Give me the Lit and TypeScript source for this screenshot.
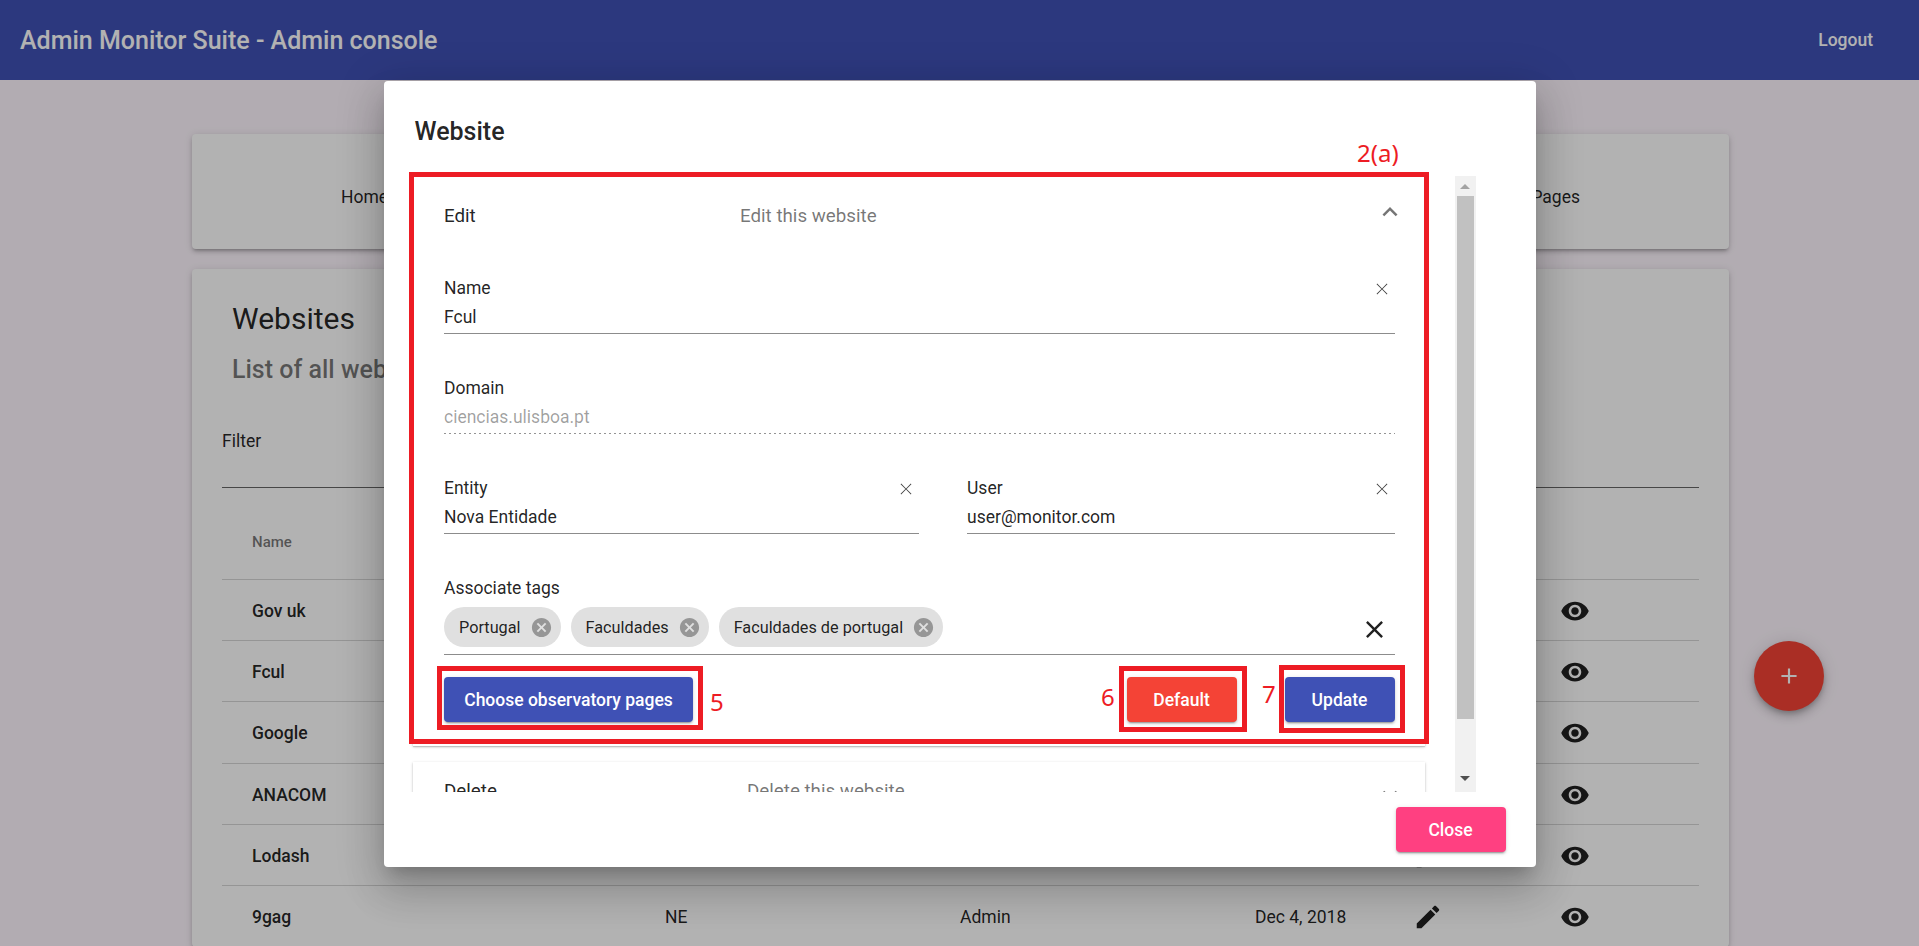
import { LitElement, css, html, svg } from 'lit'
import { customElement } from 'lit/decorators.js'

const ICONS = {
  eye: 'M12 4.5C7 4.5 2.73 7.61 1 12c1.73 4.39 6 7.5 11 7.5s9.27-3.11 11-7.5c-1.73-4.39-6-7.5-11-7.5zM12 17c-2.76 0-5-2.24-5-5s2.24-5 5-5 5 2.24 5 5-2.24 5-5 5zm0-8c-1.66 0-3 1.34-3 3s1.34 3 3 3 3-1.34 3-3-1.34-3-3-3z',
  edit: 'M3 17.25V21h3.75L17.81 9.94l-3.75-3.75L3 17.25zM20.71 7.04c.39-.39.39-1.02 0-1.41l-2.34-2.34c-.39-.39-1.02-.39-1.41 0l-1.83 1.83 3.75 3.75 1.83-1.83z',
  less: 'M12 8l-6 6 1.41 1.41L12 10.83l4.59 4.58L18 14z',
  more: 'M16.59 8.59L12 13.17 7.41 8.59 6 10l6 6 6-6z',
  cancel: 'M12 2C6.47 2 2 6.47 2 12s4.47 10 10 10 10-4.47 10-10S17.53 2 12 2zm5 13.59L15.59 17 12 13.41 8.41 17 7 15.59 10.59 12 7 8.41 8.41 7 12 10.59 15.59 7 17 8.41 13.41 12 17 15.59z',
  close: 'M19 6.41L17.59 5 12 10.59 6.41 5 5 6.41 10.59 12 5 17.59 6.41 19 12 13.41 17.59 19 19 17.59 13.41 12z',
  thin: 'M18.5 6.2L17.8 5.5 12 11.3 6.2 5.5 5.5 6.2 11.3 12 5.5 17.8 6.2 18.5 12 12.7 17.8 18.5 18.5 17.8 12.7 12z',
  add: 'M19 13h-6v6h-2v-6H5v-2h6V5h2v6h6v2z',
}

const icon = (name: keyof typeof ICONS, cls: string) => html`
  <svg class="icon ${cls}" viewBox="0 0 24 24">${svg`<path d=${ICONS[name]}></path>`}</svg>
`

const ROWS = [
  { name: 'Gov uk' },
  { name: 'Fcul' },
  { name: 'Google' },
  { name: 'ANACOM' },
  { name: 'Lodash' },
  { name: '9gag', entity: 'NE', user: 'Admin', date: 'Dec 4, 2018' },
]

const TAGS = ['Portugal', 'Faculdades', 'Faculdades de portugal']

@customElement('app-root')
export class AppRoot extends LitElement {
  static styles = css`
    :host {
      display: block;
      position: relative;
      height: 946px;
      overflow: hidden;
      background: #fff7ff;
      font-family: Roboto, sans-serif;
      font-size: 17.5px;
      color: rgba(0, 0, 0, 0.87);
    }

    .icon { display: block; fill: currentColor; flex: none; }

    .toolbar {
      display: flex;
      align-items: center;
      justify-content: space-between;
      height: 80px;
      padding: 0 46px 0 20px;
      background: #3f51b5;
      color: #fff;
    }
    .toolbar .title { font-size: 25px; font-weight: 500; }
    .toolbar .logout { font-weight: 500; }

    main {
      display: flex;
      flex-direction: column;
      gap: 20px;
      padding: 54px 190px 0 192px;
    }
    .card {
      background: #fff;
      border-radius: 4px;
      box-shadow: 0 3px 3px -2px rgba(0, 0, 0, 0.2), 0 3px 4px rgba(0, 0, 0, 0.14), 0 1px 8px rgba(0, 0, 0, 0.12);
    }
    .nav {
      display: flex;
      align-items: center;
      justify-content: space-between;
      box-sizing: border-box;
      height: 115px;
      padding: 11px 149px 0 149px;
    }
    .list { padding: 34px 30px 0; }
    .list h1 { margin: 0 0 0 10px; font-size: 30px; line-height: 32px; font-weight: 400; }
    .list h2 { margin: 20px 0 0 10px; font-size: 25px; line-height: 30px; font-weight: 500; color: rgba(0, 0, 0, 0.54); }
    .filter {
      margin-top: 46px;
      height: 56px;
      line-height: 20px;
      border-bottom: 1px solid rgba(0, 0, 0, 0.6);
    }

    .row {
      display: grid;
      grid-template-columns: 443px 295px 295px 158px 147px 1fr;
      align-items: center;
      height: 61.2px;
      padding-top: 2px;
      box-sizing: border-box;
      border-bottom: 1px solid rgba(0, 0, 0, 0.16);
    }
    .row.head {
      height: 92px;
      padding-top: 17px;
      font-size: 15px;
      font-weight: 500;
      color: rgba(0, 0, 0, 0.54);
    }
    .row .name { padding-left: 30px; }
    .row:not(.head) .name { font-weight: 500; }
    .cell-icon { width: 30px; height: 30px; color: rgba(0, 0, 0, 0.87); }

    .fab {
      position: absolute;
      left: 1754px;
      top: 641px;
      display: flex;
      align-items: center;
      justify-content: center;
      width: 70px;
      height: 70px;
      border-radius: 50%;
      background: #f44336;
      color: #fff;
      box-shadow: 0 3px 5px -1px rgba(0, 0, 0, 0.2), 0 6px 10px rgba(0, 0, 0, 0.14), 0 1px 18px rgba(0, 0, 0, 0.12);
    }
    .fab .icon { width: 26px; height: 26px; }

    .backdrop {
      position: absolute;
      inset: 0;
      display: flex;
      justify-content: center;
      padding-top: 81px;
      background: rgba(0, 0, 0, 0.3);
    }

    .modal {
      display: flex;
      flex-direction: column;
      box-sizing: border-box;
      width: 1152px;
      height: 786px;
      padding: 0 30px 0 25.5px;
      background: #fff;
      border-radius: 4px;
      box-shadow: 0 11px 15px -7px rgba(0, 0, 0, 0.2), 0 24px 38px 3px rgba(0, 0, 0, 0.14), 0 9px 46px 8px rgba(0, 0, 0, 0.12);
    }
    .modal-title {
      margin: 0;
      padding: 41px 0 34px 5.5px;
      font-size: 25px;
      line-height: 20px;
      font-weight: 500;
    }

    .scroll-area { display: flex; height: 616px; }
    .scroll-content {
      width: 1045.5px;
      padding: 0 30px 0 4px;
      box-sizing: border-box;
      overflow: hidden;
    }
    .scrollbar {
      display: flex;
      flex-direction: column;
      align-items: center;
      width: 21px;
      height: 616px;
      background: #f1f1f1;
    }
    .arrow { width: 0; height: 0; border-left: 5px solid transparent; border-right: 5px solid transparent; }
    .arrow.up { margin: 8px 0 7px; border-bottom: 5px solid #a3a3a3; }
    .arrow.down { margin-top: 57px; border-top: 5px solid #505050; }
    .thumb { width: 17px; height: 523px; background: #c1c1c1; }

    .panel {
      position: relative;
      padding: 0 30px 0 31px;
      background: #fff;
      box-shadow: 0 1px 3px rgba(0, 0, 0, 0.2), 0 1px 1px rgba(0, 0, 0, 0.14);
    }
    .panel + .panel { margin-top: 16px; }
    .panel-head { display: flex; align-items: flex-start; height: 101px; padding-top: 21px; box-sizing: border-box; font-size: 18.75px; }
    .panel-head .label { width: 296px; margin-top: 9px; line-height: 20px; }
    .panel-head .desc { flex: 1; margin-top: 9px; line-height: 20px; color: rgba(0, 0, 0, 0.54); }
    .panel-head .icon { width: 30px; height: 30px; margin-right: -10px; color: rgba(0, 0, 0, 0.54); }
    .panel-head.closed { padding-top: 19px; height: 78px; }
    .panel-head.closed .label { width: 303px; margin-top: 0; }
    .panel-head.closed .desc { margin-top: 0; }
    .panel-head.closed .icon { margin-top: -1px; }

    .field {
      height: 57px;
      box-sizing: border-box;
      margin-bottom: 43px;
      padding-top: 1px;
      border-bottom: 1px solid rgba(0, 0, 0, 0.45);
    }
    .field.disabled {
      border-bottom: 1px solid transparent;
      background: linear-gradient(to right, rgba(0, 0, 0, 0.42) 33%, transparent 0) left bottom -1px / 5px 1px repeat-x;
      background-clip: border-box;
    }
    .field.disabled .value { color: rgba(0, 0, 0, 0.38); }
    .field-top { display: flex; justify-content: space-between; height: 20px; line-height: 20px; }
    .value { margin-top: 9px; line-height: 20px; }
    .clear { width: 20px; height: 20px; margin: 1px 3px 0 0; color: rgba(0, 0, 0, 0.75); }
    .two { display: grid; grid-template-columns: 475px 428px; gap: 48px; }

    .tags {
      height: 78px;
      box-sizing: border-box;
      padding-top: 1px;
      border-bottom: 1px solid rgba(0, 0, 0, 0.45);
    }
    .tags-label { height: 20px; line-height: 20px; }
    .chips { display: flex; align-items: center; gap: 10px; margin-top: 9px; height: 40px; }
    .chip {
      display: flex;
      align-items: center;
      gap: 9px;
      height: 40px;
      padding: 0 8px 0 15px;
      border-radius: 20px;
      background: #e0e0e0;
      font-size: 16.25px;
    }
    .chip .icon { width: 23px; height: 23px; color: rgba(0, 0, 0, 0.33); }
    .clear-all { width: 29px; height: 29px; margin-left: auto; margin-right: 6px; margin-top: 4px; color: rgba(0, 0, 0, 0.87); }

    .actions { display: flex; align-items: center; gap: 48px; padding: 22px 0 24px; }
    .spacer { flex: 1; }
    button {
      height: 45px;
      padding: 0;
      border: none;
      border-radius: 4px;
      font: 500 17.5px Roboto, sans-serif;
      color: #fff;
      box-shadow: 0 3px 1px -2px rgba(0, 0, 0, 0.2), 0 2px 2px rgba(0, 0, 0, 0.14), 0 1px 5px rgba(0, 0, 0, 0.12);
    }
    .primary { background: #3f51b5; }
    .warn { background: #f44336; }
    .accent { background: #ff4081; }
    .wide { width: 249px; }
    .std { width: 110px; }

    .modal-foot { display: flex; justify-content: flex-end; padding-top: 15px; }

    /* red callouts drawn on top of the screenshot */
    .mark { position: absolute; box-sizing: border-box; border: 5px solid #ed1c24; pointer-events: none; }
    .mark-main { left: 409px; top: 172px; width: 1020px; height: 572px; }
    .mark-5 { left: 437px; top: 666px; width: 266px; height: 64px; }
    .mark-6 { left: 1119px; top: 666px; width: 128px; height: 66px; }
    .mark-7 { left: 1279px; top: 665px; width: 126px; height: 68px; }
    .tag { position: absolute; font-family: "Noto Sans", sans-serif; font-size: 24px; line-height: 30px; color: #ed1c24; }
    .tag-main { left: 1357px; top: 138px; }
    .tag-5 { left: 710px; top: 687px; }
    .tag-6 { left: 1101px; top: 682px; }
    .tag-7 { left: 1262px; top: 679px; }
  `

  render() {
    return html`
      <header class="toolbar">
        <span class="title">Admin Monitor Suite - Admin console</span>
        <span class="logout">Logout</span>
      </header>

      <main>
        <section class="card nav"><span>Home</span><span>Pages</span></section>
        <section class="card list">
          <h1>Websites</h1>
          <h2>List of all websites</h2>
          <div class="filter">Filter</div>
          <div class="row head"><span class="name">Name</span></div>
          ${ROWS.map(r => html`
            <div class="row">
              <span class="name">${r.name}</span>
              <span>${r.entity}</span>
              <span>${r.user}</span>
              <span>${r.date}</span>
              ${icon('edit', 'cell-icon')}
              ${icon('eye', 'cell-icon')}
            </div>
          `)}
        </section>
      </main>

      <div class="fab">${icon('add', '')}</div>

      <div class="backdrop">
        <div class="modal">
          <h3 class="modal-title">Website</h3>
          <div class="scroll-area">
            <div class="scroll-content">
              <div class="panel">
                <div class="panel-head">
                  <span class="label">Edit</span>
                  <span class="desc">Edit this website</span>
                  ${icon('less', '')}
                </div>
                ${this.field('Name', 'Fcul')}
                <div class="field disabled">
                  <div class="field-top">Domain</div>
                  <div class="value">ciencias.ulisboa.pt</div>
                </div>
                <div class="two">
                  ${this.field('Entity', 'Nova Entidade')}
                  ${this.field('User', 'user@monitor.com')}
                </div>
                <div class="tags">
                  <div class="tags-label">Associate tags</div>
                  <div class="chips">
                    ${TAGS.map(t => html`<span class="chip">${t}${icon('cancel', '')}</span>`)}
                    ${icon('close', 'clear-all')}
                  </div>
                </div>
                <div class="actions">
                  <button class="primary wide">Choose observatory pages</button>
                  <span class="spacer"></span>
                  <button class="warn std">Default</button>
                  <button class="primary std">Update</button>
                </div>
              </div>
              <div class="panel">
                <div class="panel-head closed">
                  <span class="label">Delete</span>
                  <span class="desc">Delete this website</span>
                  ${icon('more', '')}
                </div>
              </div>
            </div>
            <div class="scrollbar">
              <span class="arrow up"></span>
              <div class="thumb"></div>
              <span class="arrow down"></span>
            </div>
          </div>
          <div class="modal-foot"><button class="accent std">Close</button></div>
        </div>
      </div>

      <div class="mark mark-main"></div>
      <div class="mark mark-5"></div>
      <div class="mark mark-6"></div>
      <div class="mark mark-7"></div>
      <span class="tag tag-main">2(a)</span>
      <span class="tag tag-5">5</span>
      <span class="tag tag-6">6</span>
      <span class="tag tag-7">7</span>
    `
  }

  field(label: string, value: string) {
    return html`
      <div class="field">
        <div class="field-top"><span>${label}</span>${icon('thin', 'clear')}</div>
        <div class="value">${value}</div>
      </div>
    `
  }
}
